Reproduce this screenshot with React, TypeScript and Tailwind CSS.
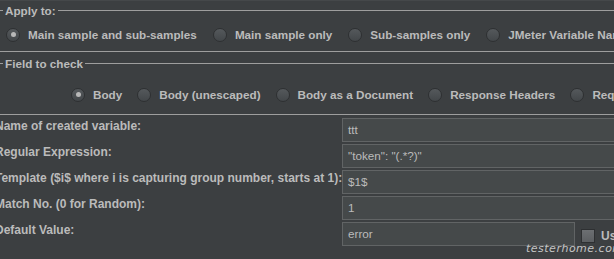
import React from "react";

function Radio({ checked }: { checked?: boolean }) {
  return (
    <span className="relative flex h-[14px] w-[14px] shrink-0 items-center justify-center rounded-full border border-[#2e3032] bg-gradient-to-b from-[#55595c] to-[#43474a]">
      {checked && <span className="h-[5px] w-[5px] rounded-full bg-[#b8b8b8]" />}
    </span>
  );
}

function RadioItem({ label, checked }: { label: string; checked?: boolean }) {
  return (
    <div className="flex shrink-0 items-center gap-[8px] whitespace-nowrap">
      <Radio checked={checked} />
      <span>{label}</span>
    </div>
  );
}

function Title({ text, lead }: { text: string; lead: number }) {
  return (
    <div className="flex h-[15px] items-center">
      <div className="h-px shrink-0 bg-[#9e9e9e]" style={{ width: lead }} />
      <span className="shrink-0 px-[2px] leading-[15px] whitespace-nowrap">{text}</span>
      <div className="h-px flex-1 bg-[#9e9e9e]" />
    </div>
  );
}

function Field({ value, wide = true }: { value: string; wide?: boolean }) {
  return (
    <div
      className={
        "flex h-[24px] shrink-0 items-center border border-[#616465] bg-[#45494a] pl-[5px] text-[11.7px] font-normal whitespace-nowrap " +
        (wide ? "w-[300px]" : "w-[233px]")
      }
    >
      {value}
    </div>
  );
}

export default function App() {
  const rows: { label: string; value: string }[] = [
    { label: "Name of created variable:", value: "ttt" },
    { label: "Regular Expression:", value: "\"token\": \"(.*?)\"" },
    { label: "Template ($i$ where i is capturing group number, starts at 1):", value: "$1$" },
    { label: "Match No. (0 for Random):", value: "1" },
  ];
  return (
    <div
      className="relative h-[259px] w-[614px] overflow-hidden bg-[#3c3f41] text-[11.7px] font-bold text-[#bbbbbb]"
      style={{ fontFamily: '"Liberation Sans", Arial, sans-serif' }}
    >
      <div className="h-px bg-[#45484a]" />
      <div className="pt-[2px]">
        <Title text="Apply to:" lead={3} />
      </div>
      <div className="mt-[9px] flex h-[15px] items-center gap-[16px] pl-[6px]">
        <RadioItem label="Main sample and sub-samples" checked />
        <RadioItem label="Main sample only" />
        <RadioItem label="Sub-samples only" />
        <RadioItem label="JMeter Variable Name to use" />
      </div>
      <div className="mt-[9px] h-px bg-[#9e9e9e]" />
      <div className="mt-[4px]">
        <Title text="Field to check" lead={3} />
      </div>
      <div className="mt-[16px] flex h-[15px] items-center gap-[15px] pl-[71px]">
        <RadioItem label="Body" checked />
        <RadioItem label="Body (unescaped)" />
        <RadioItem label="Body as a Document" />
        <RadioItem label="Response Headers" />
        <RadioItem label="Request Headers" />
      </div>
      <div className="mt-[12px] h-px bg-[#9e9e9e]" />
      <div className="mt-[3px] flex flex-col gap-[2px]">
        {rows.map((r) => (
          <div key={r.label} className="flex h-[24px] items-start">
            <div className="ml-[-5px] w-[347px] shrink-0 whitespace-nowrap pt-[1px] text-[12px] leading-[15px]">
              {r.label}
            </div>
            <Field value={r.value} />
          </div>
        ))}
        <div className="flex h-[24px] items-start">
          <div className="ml-[-5px] w-[347px] shrink-0 whitespace-nowrap pt-[1px] text-[12px] leading-[15px]">
            Default Value:
          </div>
          <Field value="error" wide={false} />
          <div className="ml-[6px] mt-[5px] flex shrink-0 items-center gap-[6px] whitespace-nowrap">
            <span className="h-[14px] w-[14px] shrink-0 border border-[#2e3032] bg-gradient-to-b from-[#6c6f72] to-[#5c5f62]" />
            <span className="text-[12px]">Use empty default value</span>
          </div>
        </div>
      </div>
      <div
        className="pointer-events-none absolute left-[526px] top-[241px] text-[11px] italic tracking-[0.5px] text-[#c4c4c4]"
        style={{ fontFamily: '"DejaVu Sans", sans-serif', fontWeight: 200 }}
      >
        testerhome.com
      </div>
    </div>
  );
}
